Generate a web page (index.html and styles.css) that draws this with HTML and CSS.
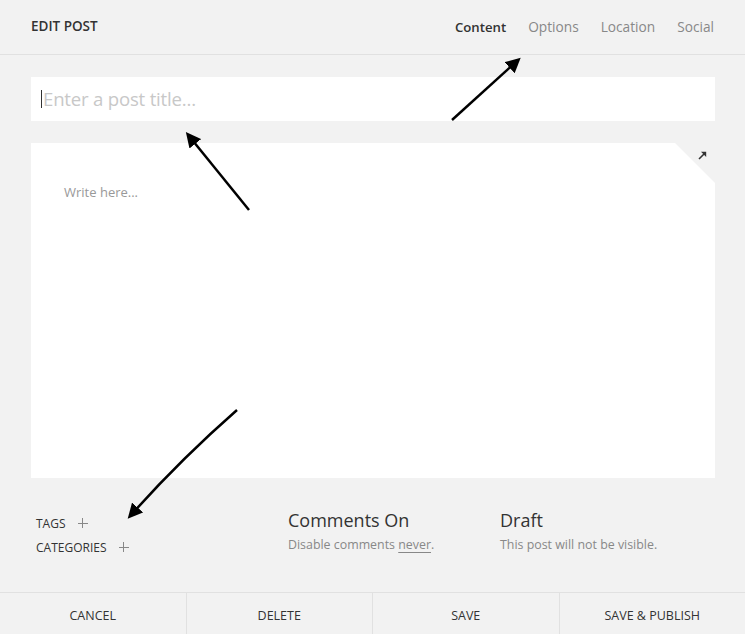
FILE: index.html
```html
<!DOCTYPE html>
<html>
<head>
<meta charset="utf-8">
<link rel="stylesheet" href="styles.css">
</head>
<body>
<div class="page">
  <header class="header">
    <div class="title">EDIT POST</div>
    <nav class="tabs">
      <span class="tab active">Content</span>
      <span class="tab">Options</span>
      <span class="tab">Location</span>
      <span class="tab">Social</span>
    </nav>
  </header>
  <main class="main">
    <div class="title-input"><span class="caret"></span><span class="placeholder">Enter a post title...</span></div>
    <div class="editor-wrap">
      <div class="editor">
        <div class="write">Write here...</div>
      </div>
      <div class="expand">
        <svg width="9" height="9" viewBox="0 0 9 9"><path d="M1 8 L6.5 2.5" stroke="#333" stroke-width="1.6"/><path d="M3 0.8 H8.2 V6 Z" fill="#333"/></svg>
      </div>
    </div>
    <div class="meta">
      <div class="taxo">
        <div class="taxo-row">TAGS <span class="plus"></span></div>
        <div class="taxo-row">CATEGORIES <span class="plus"></span></div>
      </div>
      <div class="status">
        <div class="status-title">Comments On</div>
        <div class="status-sub">Disable comments <u>never</u>.</div>
      </div>
      <div class="status">
        <div class="status-title">Draft</div>
        <div class="status-sub">This post will not be visible.</div>
      </div>
    </div>
  </main>
  <footer class="footer">
    <div class="btn">CANCEL</div>
    <div class="btn">DELETE</div>
    <div class="btn">SAVE</div>
    <div class="btn">SAVE &amp; PUBLISH</div>
  </footer>
  <svg class="arrows" width="745" height="634" viewBox="0 0 745 634">
    <defs>
      <marker id="ah" markerWidth="6" markerHeight="6" refX="4" refY="3" orient="auto" markerUnits="strokeWidth">
        <path d="M0 0 L6 3 L0 6 Z" fill="#000"/>
      </marker>
    </defs>
    <path d="M452 120 L517 61" stroke="#000" stroke-width="2.5" fill="none" marker-end="url(#ah)"/>
    <path d="M249 210 L189 136" stroke="#000" stroke-width="2.5" fill="none" marker-end="url(#ah)"/>
    <path d="M237 410 Q180 460 131 515" stroke="#000" stroke-width="2.5" fill="none" marker-end="url(#ah)"/>
  </svg>
</div>
</body>
</html>
```
FILE: styles.css
```css
* { box-sizing: border-box; }
html, body { margin: 0; padding: 0; }
body {
  background: #f2f2f2;
  font-family: "Open Sans", "Liberation Sans", sans-serif;
  color: #333;
}
.page {
  position: relative;
  width: 745px;
  height: 634px;
  display: flex;
  flex-direction: column;
  overflow: hidden;
}
.header {
  height: 55px;
  border-bottom: 1px solid #e1e1e1;
  display: flex;
  align-items: center;
  justify-content: space-between;
  padding: 0 31px 2px 31px;
}
.title {
  font-size: 13.5px;
  font-weight: 600;
  color: #333;
}
.tabs {
  display: flex;
  gap: 22px;
  align-items: baseline;
}
.tab {
  font-size: 13.7px;
  color: #888;
}
.tab.active {
  font-size: 13.2px;
  color: #333;
  font-weight: 600;
}
.main {
  flex: 1;
  padding: 22px 30px 0 31px;
  display: flex;
  flex-direction: column;
}
.title-input {
  height: 44px;
  background: #fff;
  display: flex;
  align-items: center;
  padding-left: 10px;
}
.caret {
  width: 1px;
  height: 18px;
  background: #333;
  margin-right: 1px;
}
.placeholder {
  font-size: 18.6px;
  color: #c8c8c8;
  letter-spacing: -0.2px;
  position: relative;
  top: -1px;
}
.editor-wrap {
  margin-top: 22px;
  height: 335px;
  position: relative;
}
.editor {
  height: 100%;
  background: #fff;
  clip-path: polygon(0 0, calc(100% - 40px) 0, 100% 40px, 100% 100%, 0 100%);
  padding: 40px 33px;
}
.expand {
  position: absolute;
  top: 8px;
  right: 8px;
  width: 9px;
  height: 9px;
  line-height: 0;
}
.write {
  font-size: 13px;
  color: #999;
}
.meta {
  display: flex;
  padding-top: 34px;
  padding-left: 5px;
}
.taxo {
  width: 252px;
  display: flex;
  flex-direction: column;
  gap: 6px;
  padding-top: 2px;
}
.taxo-row {
  font-size: 12px;
  color: #333;
  display: flex;
  align-items: center;
  height: 18px;
}
.plus {
  position: relative;
  width: 10px;
  height: 10px;
  margin-left: 12px;
}
.plus::before, .plus::after {
  content: "";
  position: absolute;
  background: #888;
}
.plus::before { left: 0; right: 0; top: 4.5px; height: 1px; }
.plus::after { top: 0; bottom: 0; left: 4.5px; width: 1px; }
.status {
  width: 212px;
}
.status-title {
  font-size: 18px;
  color: #333;
  line-height: 22px;
  margin-top: -3px;
}
.status-sub {
  margin-top: 5px;
  font-size: 12.4px;
  color: #888;
}
.status-sub u {
  text-underline-offset: 3px;
}
.footer {
  height: 42px;
  border-top: 1px solid #e1e1e1;
  display: flex;
}
.btn {
  flex: 1;
  display: flex;
  align-items: center;
  justify-content: center;
  font-size: 12.5px;
  color: #333;
  padding-top: 3px;
  border-left: 1px solid #e1e1e1;
}
.btn:first-child { border-left: none; }
.arrows {
  position: absolute;
  left: 0;
  top: 0;
  pointer-events: none;
}
```
